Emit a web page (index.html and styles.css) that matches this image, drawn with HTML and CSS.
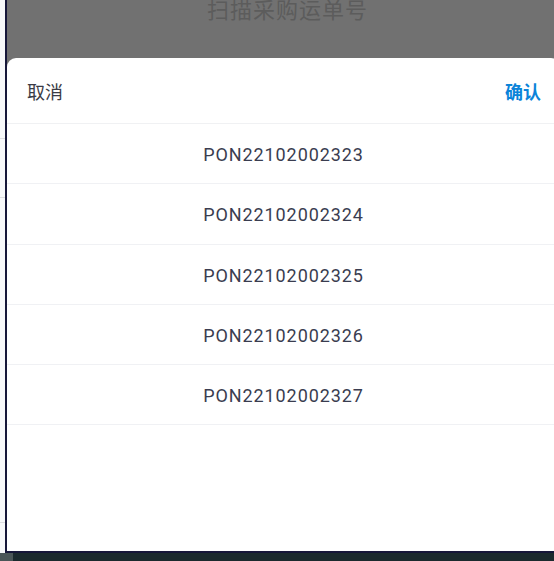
FILE: index.html
```html
<html lang="zh-CN">

<head>
    <meta charset="UTF-8">
    <meta name="viewport" content="width=device-width, initial-scale=1.0">
    <title>扫描采购运单号</title>
    <link rel="stylesheet" href="styles.css">
</head>

<body>
    <div class="frame">
        <div class="side">
            <div class="side-row"></div>
            <div class="side-row side-icon"></div>
            <div class="side-row side-last"></div>
        </div>

        <div class="screen">
            <div class="backdrop">
                <h1 class="page-title">扫描采购运单号</h1>
            </div>

            <div class="sheet">
                <div class="toolbar">
                    <span class="cancel">取消</span>
                    <span class="confirm">确认</span>
                </div>
                <ul class="options">
                    <li>PON22102002323</li>
                    <li>PON22102002324</li>
                    <li>PON22102002325</li>
                    <li>PON22102002326</li>
                    <li>PON22102002327</li>
                </ul>
            </div>
        </div>
    </div>

    <div class="taskbar">
        <span class="taskbar-start"></span>
    </div>
</body>

</html>
```

FILE: styles.css
```css
body {
    margin: 0;
    padding: 0;
    width: 554px;
    height: 561px;
    overflow: hidden;
    background-color: #1b2a2e;
    font-family: Roboto, "Noto Sans CJK SC", sans-serif;
}

.frame {
    display: flex;
    height: 553px;
}

.side {
    width: 5px;
    flex-shrink: 0;
    background-color: #f7f8fa;
    padding-top: 138px;
}

.side-row {
    height: 58px;
    border-top: 1px solid #dcdde0;
}

.side-icon {
    height: 324px;
}

.side-last {
    height: 30px;
}

.screen {
    flex: 1;
    display: flex;
    flex-direction: column;
    overflow: hidden;
    border-left: 2px solid #161739;
    border-bottom: 2px solid #161739;
    background-color: #717171;
}

.backdrop {
    height: 58px;
    flex-shrink: 0;
    background-color: #717171;
    overflow: hidden;
}

.page-title {
    margin: -8px 0 0 0;
    padding-left: 14px;
    text-align: center;
    font-size: 22px;
    font-weight: normal;
    letter-spacing: 1px;
    color: #5c5c5c;
}

.sheet {
    flex: 1;
    width: 553px;
    background: white;
    border-radius: 9px 9px 0 0;
}

.toolbar {
    display: flex;
    justify-content: space-between;
    align-items: center;
    height: 65px;
    padding: 0 20px 0 20px;
    border-bottom: 1px solid #f0f1f3;
    font-size: 18px;
}

.cancel {
    color: #3a3b45;
}

.confirm {
    color: #0b84d9;
    font-weight: bold;
    margin-right: -1px;
}

.options {
    list-style: none;
    margin: 0;
    padding: 0;
}

.options li {
    height: 60.25px;
    padding-top: 1px;
    line-height: 59px;
    box-sizing: border-box;
    border-bottom: 1px solid #f0f1f4;
    text-align: center;
    font-size: 18px;
    letter-spacing: 0.9px;
    color: #3a3d50;
}

.taskbar {
    height: 8px;
    display: flex;
}

.taskbar-start {
    width: 13px;
    background-color: #4a5658;
}
```
